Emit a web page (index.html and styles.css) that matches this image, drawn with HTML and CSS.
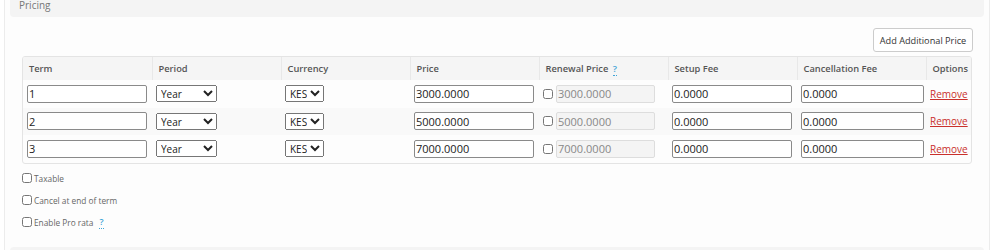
FILE: index.html
```html
<!DOCTYPE html>
<html lang="en">
<head>
    <meta charset="UTF-8">
    <title>Pricing</title>
    <link rel="stylesheet" href="styles.css">
</head>
<body>
    <div class="panel">
        <div class="panel-heading">Pricing</div>
        <div class="panel-body">
            <div class="toolbar">
                <button class="btn">Add Additional Price</button>
            </div>
            <div class="table-wrap">
                <table class="pricing">
                    <thead>
                        <tr>
                            <th class="col">Term</th>
                            <th class="col">Period</th>
                            <th class="col">Currency</th>
                            <th class="col">Price</th>
                            <th class="col">Renewal Price <span class="help">?</span></th>
                            <th class="col">Setup Fee</th>
                            <th class="col">Cancellation Fee</th>
                            <th class="col-opt">Options</th>
                        </tr>
                    </thead>
                    <tbody>
                        <tr>
                            <td><input class="field" type="text" value="1"></td>
                            <td><select class="sel-period"><option>Year</option></select></td>
                            <td><select class="sel-cur"><option>KES</option></select></td>
                            <td><input class="field" type="text" value="3000.0000"></td>
                            <td><input class="check" type="checkbox"><input class="field renew" type="text" value="3000.0000" disabled></td>
                            <td><input class="field" type="text" value="0.0000"></td>
                            <td><input class="field wide" type="text" value="0.0000"></td>
                            <td><a class="remove" href="#">Remove</a></td>
                        </tr>
                        <tr>
                            <td><input class="field" type="text" value="2"></td>
                            <td><select class="sel-period"><option>Year</option></select></td>
                            <td><select class="sel-cur"><option>KES</option></select></td>
                            <td><input class="field" type="text" value="5000.0000"></td>
                            <td><input class="check" type="checkbox"><input class="field renew" type="text" value="5000.0000" disabled></td>
                            <td><input class="field" type="text" value="0.0000"></td>
                            <td><input class="field wide" type="text" value="0.0000"></td>
                            <td><a class="remove" href="#">Remove</a></td>
                        </tr>
                        <tr>
                            <td><input class="field" type="text" value="3"></td>
                            <td><select class="sel-period"><option>Year</option></select></td>
                            <td><select class="sel-cur"><option>KES</option></select></td>
                            <td><input class="field" type="text" value="7000.0000"></td>
                            <td><input class="check" type="checkbox"><input class="field renew" type="text" value="7000.0000" disabled></td>
                            <td><input class="field" type="text" value="0.0000"></td>
                            <td><input class="field wide" type="text" value="0.0000"></td>
                            <td><a class="remove" href="#">Remove</a></td>
                        </tr>
                    </tbody>
                </table>
            </div>
            <div class="options">
                <label class="opt"><input class="check" type="checkbox"> Taxable</label>
                <label class="opt"><input class="check" type="checkbox"> Cancel at end of term</label>
                <label class="opt"><input class="check" type="checkbox"> Enable Pro rata <span class="help">?</span></label>
            </div>
        </div>
        <div class="panel-heading next"></div>
    </div>
</body>
</html>
```

FILE: styles.css
```css
* {
    margin: 0;
    padding: 0;
    box-sizing: border-box;
}

body {
    font-family: "Open Sans", "Liberation Sans", sans-serif;
    background: #ffffff;
    color: #333;
    height: 250px;
    overflow: hidden;
}

.panel {
    margin: 0 10px 0 4px;
    height: 250px;
    border-left: 1px solid #ececec;
    border-right: 1px solid #ececec;
    background: #fdfdfd;
}

.panel-heading {
    margin: 0 5px;
    height: 17px;
    padding: 0 9px;
    background: #f4f4f4;
    border-radius: 0 0 4px 4px;
    font-size: 10px;
    line-height: 10px;
    color: #777;
}

.panel-heading.next {
    border-radius: 4px 4px 0 0;
    height: 10px;
}

.panel-body {
    padding: 0 17px;
    height: 230px;
}

.toolbar {
    display: flex;
    justify-content: flex-end;
    padding-top: 11px;
}

.btn {
    font-family: inherit;
    font-size: 9.2px;
    white-space: nowrap;
    color: #333;
    background: #fff;
    border: 1px solid #ccc;
    border-radius: 3px;
    height: 24px;
    width: 100px;
    padding: 0;
    margin-right: -1px;
}

.table-wrap {
    margin-top: 4px;
    border: 1px solid #e4e4e4;
    border-radius: 3px;
    overflow: hidden;
}

.pricing {
    width: 100%;
    table-layout: fixed;
    border-collapse: collapse;
    font-size: 9.3px;
}

.pricing th {
    background: #f5f5f5;
    color: #555;
    font-weight: 600;
    text-align: left;
    height: 23px;
    padding: 0 6px;
    border-left: 1px solid #e8e8e8;
    white-space: nowrap;
}

.pricing th:first-child {
    border-left: 0;
}

.pricing .col {
    width: 129px;
}

.pricing .col-opt {
    width: 47px;
}

.pricing td {
    padding: 0 4px;
    height: 27.5px;
    white-space: nowrap;
}

.pricing tbody tr:nth-child(2) td {
    background: #f9f9f9;
}

.field {
    font-family: inherit;
    font-size: 11px;
    color: #222;
    width: 120px;
    height: 18px;
    padding: 0 1px;
    border: 1px solid #8a8a8a;
    border-radius: 2px;
    background: #fff;
    vertical-align: middle;
}

.field.wide {
    width: 123px;
}

.field.renew {
    width: 99px;
    background: #f4f4f4;
    border-color: #ddd;
    color: #888;
}

select {
    font-family: inherit;
    font-size: 10px;
    height: 17px;
    padding: 0;
    vertical-align: middle;
    color: #222;
}

.sel-period {
    width: 61px;
}

.sel-cur {
    width: 39px;
}

.check {
    width: 10px;
    height: 10px;
    margin: 0 3px 0 0;
    vertical-align: middle;
}

.help {
    color: #3fa4d6;
    font-weight: 600;
    border-bottom: 1px dotted #3fa4d6;
    margin-left: 2px;
}

.remove {
    color: #c9302c;
    text-decoration: underline;
    font-size: 10px;
}

.options {
    display: flex;
    flex-direction: column;
    gap: 9px;
    padding-top: 8px;
}

.opt {
    font-size: 8.3px;
    color: #666;
    display: flex;
    align-items: center;
    height: 13px;
}

.opt .check {
    margin-right: 2px;
}

.opt .help {
    margin-left: 6px;
    font-size: 9px;
}
```
